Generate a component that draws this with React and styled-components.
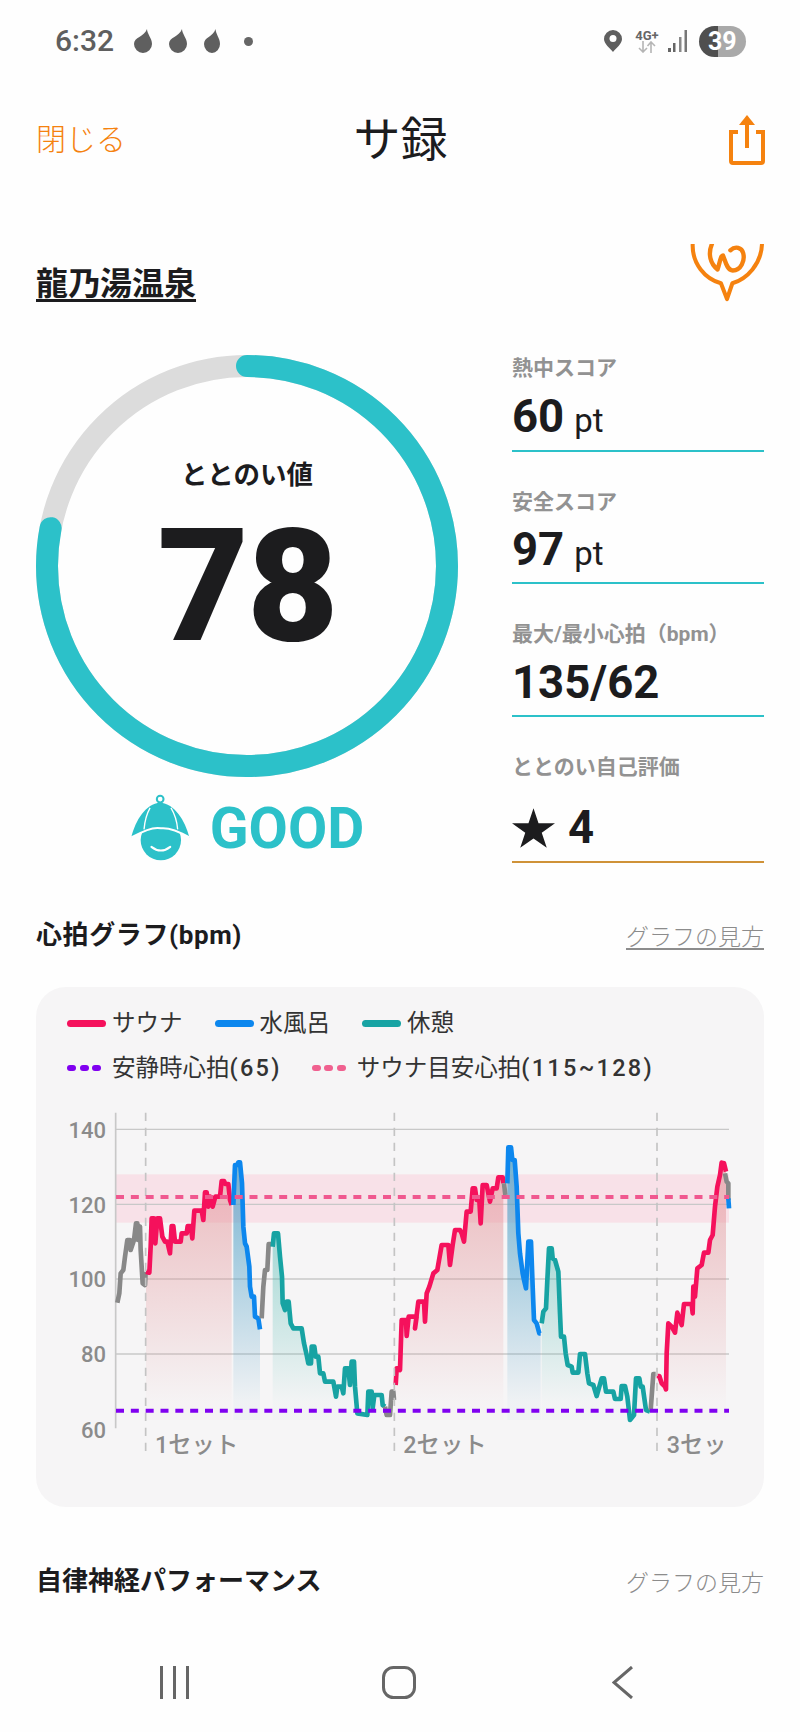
import React from 'react';
import styled, { createGlobalStyle } from 'styled-components';

const TEAL = '#2cc1c9';
const ORANGE = '#f5820f';

const GlobalStyle = createGlobalStyle`
html, body {
  margin: 0;
  padding: 0;
  background: #fff;
  font-family: Roboto, "Noto Sans CJK JP", sans-serif;
}
`

const Page = styled.div`
width: 800px;
height: 1732px;
overflow: hidden;
display: flex;
flex-direction: column;
background: #fefefe;
color: #1c1c1e;
`

// status bar
const StatusBar = styled.div`
height: 82px;
flex-shrink: 0;
display: flex;
align-items: center;
justify-content: space-between;
padding: 0 54px 0 55px;
color: #5f5f5f;
`
const StatusGroup = styled.div`
display: flex;
align-items: center;
`
const Time = styled.span`
font-size: 30px;
font-weight: 500;
line-height: 1;
margin-right: 20px;
`
const Drop = styled.svg`
margin-right: 17px;
display: block;
`
const Dot = styled.span`
width: 9px;
height: 9px;
margin-left: 7px;
border-radius: 50%;
background: #666;
`
const NetBlock = styled.div`
width: 26px;
margin: 0 8px 0 12px;
display: flex;
flex-direction: column;
align-items: center;
`
const NetLabel = styled.span`
font-size: 13px;
font-weight: 700;
line-height: 11px;
color: #666;
`
const Battery = styled.div`
width: 47px;
height: 31px;
margin-left: 12px;
border-radius: 16px;
background: linear-gradient(90deg, #4f4f4f 0 40%, #a9a9a9 40% 100%);
color: #fff;
font-size: 25px;
font-weight: 700;
line-height: 31px;
padding-left: 9px;
box-sizing: border-box;
`

// header
const Header = styled.div`
margin-top: 28px;
height: 60px;
flex-shrink: 0;
padding: 0 35px 0 36px;
display: grid;
grid-template-columns: 1fr auto 1fr;
align-items: center;
`
const CloseText = styled.span`
font-size: 30px;
font-weight: 300;
padding-bottom: 7px;
color: ${ORANGE};
`
const Title = styled.h1`
margin: 0;
font-size: 47px;
font-weight: 400;
line-height: 60px;
`
const ShareIcon = styled.svg`
justify-self: end;
display: block;
`

const VenueRow = styled.div`
margin-top: 73px;
height: 57px;
flex-shrink: 0;
padding: 0 36px;
display: flex;
align-items: flex-end;
justify-content: space-between;
`
const VenueName = styled.span`
font-size: 32px;
font-weight: 700;
line-height: 38px;
text-decoration: underline;
text-decoration-thickness: 3px;
text-underline-offset: 4px;
margin-bottom: -3px;
`
const LogoSvg = styled.svg`
display: block;
margin-bottom: -2px;
`

// score section
const ScoreRow = styled.div`
margin-top: 55px;
flex-shrink: 0;
padding: 0 36px;
display: flex;
justify-content: space-between;
`
const ScoreLeft = styled.div`
width: 422px;
display: flex;
flex-direction: column;
`
const RingWrap = styled.div`
width: 422px;
height: 422px;
display: grid;
& > * {
  grid-area: 1 / 1;
}
`
const RingCenter = styled.div`
display: flex;
flex-direction: column;
align-items: center;
padding-top: 102px;
`
const RingLabel = styled.span`
font-size: 26.5px;
font-weight: 700;
line-height: 36px;
`
const RingValue = styled.span`
margin-top: 8px;
font-size: 158px;
font-weight: 900;
line-height: 170px;
letter-spacing: -2px;
`
const Grade = styled.div`
margin-top: 16px;
display: flex;
align-items: center;
justify-content: center;
gap: 20px;
`
const GradeText = styled.span`
font-size: 57px;
font-weight: 700;
line-height: 65px;
color: ${TEAL};
`

const StatList = styled.div`
width: 252px;
display: flex;
flex-direction: column;
`
const Stat = styled.div`
height: ${(p) => p.$height}px;
box-sizing: border-box;
padding-top: ${(p) => p.$top}px;
border-bottom: 2px solid ${(p) => p.$line};
`
const StatLabel = styled.div`
font-size: 21px;
font-weight: 700;
line-height: 26px;
color: #929292;
white-space: nowrap;
`
const StatValue = styled.div`
margin-top: ${(p) => p.$gap}px;
display: flex;
align-items: baseline;
font-size: 45.5px;
font-weight: 700;
line-height: 52px;
`
const StatUnit = styled.span`
margin-left: 10px;
font-size: 33px;
font-weight: 400;
`
const StarIcon = styled.svg`
margin-right: 13px;
align-self: center;
display: block;
`

// sections
const SectionHead = styled.div`
margin-top: ${(p) => p.$top}px;
height: 36px;
flex-shrink: 0;
padding: 0 36px;
display: flex;
align-items: center;
justify-content: space-between;
`
const SectionTitle = styled.span`
font-size: 26px;
font-weight: 700;
line-height: 36px;
letter-spacing: ${(p) => p.$spacing || 0}px;
`
const HelpLink = styled.span`
font-size: 23px;
font-weight: 300;
color: #8c8c8c;
text-decoration: ${(p) => (p.$underline ? 'underline' : 'none')};
text-underline-offset: 3px;
`

// chart card
const Card = styled.div`
margin: 34px 36px 0;
height: 520px;
flex-shrink: 0;
box-sizing: border-box;
padding-top: 20px;
border-radius: 30px;
background: #f6f5f6;
overflow: hidden;
`
const Legend = styled.div`
padding-left: 31px;
display: flex;
flex-direction: column;
gap: 13px;
`
const LegendRow = styled.div`
display: flex;
gap: ${(p) => p.$gap}px;
height: 32px;
`
const LegendItem = styled.div`
display: flex;
align-items: center;
gap: ${(p) => p.$gap}px;
font-size: 23.5px;
line-height: 32px;
color: #333;
white-space: nowrap;
`
const LegendNum = styled.span`
letter-spacing: 2.3px;
font-weight: 500;
`
const LineSwatch = styled.span`
width: 39px;
height: 7px;
border-radius: 4px;
background: ${(p) => p.$color};
`
const DotSwatch = styled.span`
width: 34px;
display: flex;
justify-content: space-between;
`
const Pip = styled.span`
width: 9px;
height: 6px;
border-radius: 3px;
background: ${(p) => p.$color};
`
const ChartSvg = styled.svg`
display: block;
margin-top: 16px;
`
const AxisText = styled.text`
font-family: Roboto, "Noto Sans CJK JP", sans-serif;
font-size: ${(p) => p.$size || 66}px;
font-weight: 500;
fill: #8b8b8b;
text-anchor: ${(p) => p.$anchor || 'start'};
`

// nav bar
const NavBar = styled.div`
margin-top: auto;
margin-bottom: 33px;
padding: 0 166px 0 160px;
display: flex;
justify-content: space-between;
`
const HomeIcon = styled.svg`
display: block;
margin-right: 3px;
`

const RED = '#f5115c';
const BLUE = '#0d87ee';
const GREEN = '#17a3a3';
const GRAY = '#888888';

// chart points are in 3x card units
const shift = (pts) => pts.map(([x, y]) => [x + 1110, y]);

const series = [
  { color: GRAY, pts: [[262, 608], [268, 580], [272, 520], [280, 510], [285, 470], [292, 420], [300, 420], [302, 450], [312, 420], [318, 370], [322, 370], [324, 420], [330, 380], [332, 450], [338, 550], [345, 555], [347, 515]] },
  { color: RED, fill: 'fillRed', pts: [[348, 515], [358, 518], [362, 440], [365, 355], [372, 355], [376, 430], [382, 355], [390, 355], [397, 410], [405, 425], [412, 425], [420, 460], [425, 378], [430, 378], [435, 425], [452, 425], [455, 400], [470, 400], [473, 378], [482, 378], [487, 415], [493, 332], [515, 332], [520, 360], [525, 277], [530, 277], [535, 320], [540, 290], [548, 320], [556, 290], [570, 290], [575, 243], [582, 243], [586, 252], [595, 252], [600, 300], [605, 315]] },
  { color: BLUE, fill: 'fillBlue', pts: [[610, 315], [615, 195], [622, 195], [625, 187], [630, 187], [636, 250], [640, 380], [645, 430], [650, 440], [658, 500], [660, 560], [665, 590], [672, 590], [675, 650], [685, 655], [690, 688]] },
  { color: GRAY, pts: [[695, 655], [700, 560], [705, 510], [712, 510], [716, 432], [724, 432]] },
  { color: GREEN, fill: 'fillTeal', pts: [[728, 440], [732, 400], [744, 400], [750, 470], [756, 530], [758, 610], [765, 630], [770, 605], [776, 605], [782, 670], [790, 685], [815, 685], [822, 730], [830, 765], [835, 790], [843, 790], [845, 740], [853, 740], [857, 770], [865, 770], [870, 820], [880, 820], [885, 845], [910, 845], [918, 890], [922, 860], [935, 860], [940, 880], [945, 805], [955, 805], [960, 855], [965, 785], [972, 785], [975, 860], [982, 940], [1012, 945], [1015, 875], [1025, 875], [1028, 925], [1033, 885], [1055, 885], [1058, 915], [1065, 920]] },
  { color: GRAY, pts: [[1065, 920], [1070, 945], [1080, 945], [1085, 875], [1090, 875], [1092, 900]] },
  { color: RED, fill: 'fillRed', pts: [[1097, 855], [1100, 805], [1108, 805], ...shift([[0, 810], [5, 660], [18, 660], [20, 708], [26, 650], [50, 650], [45, 685], [55, 605], [72, 605], [75, 665], [80, 580], [88, 560], [100, 520], [112, 510], [125, 435], [145, 435], [150, 495], [158, 435], [165, 390], [180, 390], [185, 400], [192, 425], [200, 335], [212, 335], [218, 265], [225, 265], [230, 300], [238, 300], [242, 370], [248, 255], [260, 255], [270, 305], [278, 265], [290, 265], [295, 232], [308, 232], [310, 250]])] },
  { color: GRAY, pts: shift([[312, 250], [316, 285]]) },
  { color: BLUE, fill: 'fillBlue', pts: shift([[322, 250], [325, 142], [333, 142], [337, 180], [344, 180], [350, 260], [355, 400], [360, 460], [368, 520], [372, 540], [378, 565], [385, 425], [393, 425], [398, 560], [402, 660], [410, 670], [418, 700], [422, 700]]) },
  { color: GREEN, fill: 'fillTeal', pts: shift([[425, 670], [430, 635], [438, 625], [442, 540], [447, 445], [455, 445], [458, 475], [465, 480], [475, 515], [480, 640], [483, 710], [492, 710], [497, 760], [503, 795], [515, 800], [518, 818], [535, 818], [540, 762], [555, 762], [562, 820], [567, 850], [580, 855], [590, 888], [598, 860], [605, 835], [612, 835], [618, 875], [640, 875], [645, 897], [662, 897], [665, 858], [675, 858], [682, 890], [690, 960], [702, 945], [708, 835], [718, 835], [722, 860], [728, 860], [738, 930], [750, 935]]) },
  { color: GRAY, pts: shift([[752, 930], [760, 822], [767, 822]]) },
  { color: RED, fill: 'fillRed', pts: shift([[770, 828], [778, 828], [785, 850], [795, 860], [798, 868], [800, 760], [805, 670], [815, 680], [825, 698], [832, 638], [845, 675], [852, 612], [875, 612], [878, 640], [880, 560], [885, 590], [892, 505], [905, 495], [912, 458], [925, 458], [930, 420], [938, 405], [945, 320], [952, 260], [960, 225], [965, 188], [972, 190], [978, 215]]) },
  { color: GRAY, pts: shift([[975, 220], [980, 245], [985, 250], [985, 300]]) },
  { color: BLUE, pts: shift([[985, 295], [987, 325]]) },
];

const toPoints = (pts) => pts.map((p) => p.join(',')).join(' ');
const toArea = (pts) => toPoints([...pts, [pts[pts.length - 1][0], 960], [pts[0][0], 960]]);

const gridYs = [88, 313, 537, 762];
const yLabels = [['140', 115], ['120', 338], ['100', 562], ['80', 787], ['60', 1013]];
const setLines = [347, 1093, 1881];
const chartRight = 2097;

function HeartChart() {
  return (
    <ChartSvg width="728" height="405" viewBox="18 0 2184 1215">
      <defs>
        <linearGradient id="fillRed" gradientUnits="userSpaceOnUse" x1="0" y1="200" x2="0" y2="905">
          <stop offset="0" stopColor="#e28f94" stopOpacity="0.58" />
          <stop offset="1" stopColor="#e28f94" stopOpacity="0.02" />
        </linearGradient>
        <linearGradient id="fillBlue" gradientUnits="userSpaceOnUse" x1="0" y1="200" x2="0" y2="905">
          <stop offset="0" stopColor="#4d9fc6" stopOpacity="0.75" />
          <stop offset="1" stopColor="#4d9fc6" stopOpacity="0.04" />
        </linearGradient>
        <linearGradient id="fillTeal" gradientUnits="userSpaceOnUse" x1="0" y1="400" x2="0" y2="905">
          <stop offset="0" stopColor="#3fb5ab" stopOpacity="0.45" />
          <stop offset="1" stopColor="#3fb5ab" stopOpacity="0.02" />
        </linearGradient>
        <clipPath id="setClip">
          <rect x="18" y="960" width="2062" height="140" />
        </clipPath>
      </defs>

      <rect x="257" y="223" width={chartRight - 257} height="145" fill="#f8e1e8" />
      {gridYs.map((y) => (
        <line key={y} x1="257" x2={chartRight} y1={y} y2={y} stroke="#c8c8c8" strokeWidth="4" />
      ))}
      <line x1="257" x2="257" y1="38" y2="985" stroke="#c8c8c8" strokeWidth="5" />

      {series.filter((s) => s.fill).map((s, i) => (
        <polygon key={i} points={toArea(s.pts)} fill={`url(#${s.fill})`} />
      ))}
      {series.map((s, i) => (
        <polyline key={i} points={toPoints(s.pts)} fill="none" stroke={s.color} strokeWidth="14" strokeLinejoin="round" />
      ))}

      {setLines.map((x) => (
        <line key={x} x1={x} x2={x} y1="38" y2="1068" stroke="#c4c4c4" strokeWidth="5" strokeDasharray="25 20" />
      ))}
      <line x1="258" x2={chartRight} y1="291" y2="291" stroke="#f0588f" strokeWidth="12" strokeDasharray="24 20.5" />
      <line x1="258" x2={chartRight} y1="932" y2="932" stroke="#8000f0" strokeWidth="12" strokeDasharray="24 20.5" />

      {yLabels.map(([t, y]) => (
        <AxisText key={t} x="228" y={y} $anchor="end">{t}</AxisText>
      ))}
      <g clipPath="url(#setClip)">
        <AxisText x="375" y="1058" $size={70}>1セット</AxisText>
        <AxisText x="1120" y="1058" $size={70}>2セット</AxisText>
        <AxisText x="1910" y="1058" $size={70}>3セット</AxisText>
      </g>
    </ChartSvg>
  );
}

function DropIcon({ width }) {
  return (
    <Drop width={width} height="24" viewBox="0 0 18 24" preserveAspectRatio="none">
      <path d="M13 0 C13 5 18 9 18 15 A9 9 0 1 1 0 15 C0 8 10 8 13 0 Z" fill="#5f5f5f" />
    </Drop>
  );
}

function ScoreRing() {
  const r = 200;
  const c = 2 * Math.PI * r;
  return (
    <svg width="422" height="422" viewBox="0 0 422 422">
      <circle cx="211" cy="211" r={r} fill="none" stroke="#dcdcdc" strokeWidth="22" />
      <circle
        cx="211"
        cy="211"
        r={r}
        fill="none"
        stroke={TEAL}
        strokeWidth="22"
        strokeLinecap="round"
        strokeDasharray={`${c * 0.78} ${c}`}
        transform="rotate(-90 211 211)"
      />
    </svg>
  );
}

function CapIcon() {
  return (
    <svg width="60" height="70" viewBox="60 40 175 208">
      <circle cx="148" cy="58" r="10" fill="none" stroke={TEAL} strokeWidth="6" />
      <circle cx="150" cy="180" r="60" fill={TEAL} />
      <path d="M62 172 C75 120 105 72 148 68 C190 72 222 120 235 172 C205 155 175 142 150 145 C125 140 95 155 62 172 Z" fill={TEAL} />
      <path d="M62 172 C95 155 125 140 150 145 C175 142 205 155 235 172" fill="none" stroke="#fff" strokeWidth="6" />
      <path d="M118 84 C106 105 102 125 100 148 M180 84 C193 105 198 125 200 148" fill="none" stroke="#fff" strokeWidth="4" />
      <path d="M122 200 Q150 222 178 200" fill="none" stroke="#fff" strokeWidth="6" strokeLinecap="round" />
    </svg>
  );
}

function VenueLogo() {
  return (
    <LogoSvg width="74" height="58" viewBox="60 72 220 171">
      <path
        d="M68 72 C66 130 105 175 152 188 L170 235 L186 188 C230 175 272 130 274 72"
        fill="none"
        stroke={ORANGE}
        strokeWidth="12"
        strokeLinejoin="round"
        strokeLinecap="round"
      />
      <path
        d="M125 72 C113 100 120 130 142 147 C150 120 152 105 158 105 C165 122 170 150 187 150 C212 150 224 120 218 98 C214 82 195 76 180 90"
        fill="none"
        stroke={ORANGE}
        strokeWidth="13"
        strokeLinejoin="round"
        strokeLinecap="round"
      />
    </LogoSvg>
  );
}

export default function App() {
  return (
    <Page>
      <GlobalStyle />

      <StatusBar>
        <StatusGroup>
          <Time>6:32</Time>
          <DropIcon width={18} />
          <DropIcon width={18} />
          <DropIcon width={16} />
          <Dot />
        </StatusGroup>
        <StatusGroup>
          <svg width="18" height="22" viewBox="0 0 18 22">
            <path d="M9 0 A9 9 0 0 1 18 9 C18 14 12 18 9 22 C6 18 0 14 0 9 A9 9 0 0 1 9 0 Z" fill="#5f5f5f" />
            <circle cx="9" cy="8.5" r="3.5" fill="#fff" />
          </svg>
          <NetBlock>
            <NetLabel>4G+</NetLabel>
            <svg width="18" height="12" viewBox="0 0 18 12">
              <path d="M5 0 V11 M1 7 L5 11 L9 7" fill="none" stroke="#b5b5b5" strokeWidth="1.6" />
              <path d="M13 12 V1 M9.5 5 L13 1 L17 5" fill="none" stroke="#b5b5b5" strokeWidth="1.6" />
            </svg>
          </NetBlock>
          <svg width="19" height="22" viewBox="0 0 19 22">
            <rect x="0" y="18" width="3" height="4" fill="#666" />
            <rect x="5" y="13" width="2.5" height="9" fill="#666" />
            <rect x="11" y="7" width="2.5" height="15" fill="#888" />
            <rect x="16.5" y="0" width="2.5" height="22" fill="#777" />
          </svg>
          <Battery>39</Battery>
        </StatusGroup>
      </StatusBar>

      <Header>
        <CloseText>閉じる</CloseText>
        <Title>サ録</Title>
        <ShareIcon width="36" height="50" viewBox="0 0 36 50">
          <path d="M9 17 H2 V46 Q2 48 4 48 H32 Q34 48 34 46 V17 H27" fill="none" stroke={ORANGE} strokeWidth="4" />
          <path d="M18 3 V33" fill="none" stroke={ORANGE} strokeWidth="4" />
          <path d="M18 0 L26 10 H10 Z" fill={ORANGE} />
        </ShareIcon>
      </Header>

      <VenueRow>
        <VenueName>龍乃湯温泉</VenueName>
        <VenueLogo />
      </VenueRow>

      <ScoreRow>
        <ScoreLeft>
          <RingWrap>
            <ScoreRing />
            <RingCenter>
              <RingLabel>ととのい値</RingLabel>
              <RingValue>78</RingValue>
            </RingCenter>
          </RingWrap>
          <Grade>
            <CapIcon />
            <GradeText>GOOD</GradeText>
          </Grade>
        </ScoreLeft>
        <StatList>
          <Stat $height={97} $top={0} $line={TEAL}>
            <StatLabel>熱中スコア</StatLabel>
            <StatValue $gap={10}>60<StatUnit>pt</StatUnit></StatValue>
          </Stat>
          <Stat $height={132} $top={37} $line={TEAL}>
            <StatLabel>安全スコア</StatLabel>
            <StatValue $gap={9}>97<StatUnit>pt</StatUnit></StatValue>
          </Stat>
          <Stat $height={133} $top={37} $line={TEAL}>
            <StatLabel>最大/最小心拍（bpm）</StatLabel>
            <StatValue $gap={10}>135/62</StatValue>
          </Stat>
          <Stat $height={146} $top={37} $line="#cf9238">
            <StatLabel>ととのい自己評価</StatLabel>
            <StatValue $gap={22}>
              <StarIcon width="43" height="40" viewBox="0 0 24 22">
                <path d="M12 0 L14.8 8.3 H24 L16.6 13.6 L19.4 22 L12 16.8 L4.6 22 L7.4 13.6 L0 8.3 H9.2 Z" fill="#1c1c1e" />
              </StarIcon>
              4
            </StatValue>
          </Stat>
        </StatList>
      </ScoreRow>

      <SectionHead $top={54}>
        <SectionTitle $spacing={0.6}>心拍グラフ(bpm)</SectionTitle>
        <HelpLink $underline>グラフの見方</HelpLink>
      </SectionHead>

      <Card>
        <Legend>
          <LegendRow $gap={32}>
            <LegendItem $gap={6}><LineSwatch $color={RED} />サウナ</LegendItem>
            <LegendItem $gap={6}><LineSwatch $color={BLUE} />水風呂</LegendItem>
            <LegendItem $gap={6}><LineSwatch $color={GREEN} />休憩</LegendItem>
          </LegendRow>
          <LegendRow $gap={30}>
            <LegendItem $gap={11}>
              <DotSwatch><Pip $color="#8000f0" /><Pip $color="#8000f0" /><Pip $color="#8000f0" /></DotSwatch>
              <span>安静時心拍<LegendNum>(65)</LegendNum></span>
            </LegendItem>
            <LegendItem $gap={11}>
              <DotSwatch><Pip $color="#f0608f" /><Pip $color="#f0608f" /><Pip $color="#f0608f" /></DotSwatch>
              <span>サウナ目安心拍<LegendNum>(115~128)</LegendNum></span>
            </LegendItem>
          </LegendRow>
        </Legend>
        <HeartChart />
      </Card>

      <SectionHead $top={56}>
        <SectionTitle>自律神経パフォーマンス</SectionTitle>
        <HelpLink>グラフの見方</HelpLink>
      </SectionHead>

      <NavBar>
        <svg width="29" height="33" viewBox="0 0 29 33">
          <path d="M1.5 0 V33 M14.5 0 V33 M27.5 0 V33" stroke="#666" strokeWidth="3" />
        </svg>
        <HomeIcon width="34" height="33" viewBox="0 0 34 33">
          <rect x="1.5" y="1.5" width="31" height="30" rx="10" fill="none" stroke="#666" strokeWidth="3" />
        </HomeIcon>
        <svg width="22" height="33" viewBox="0 0 22 33">
          <path d="M20 1 L2 16.5 L20 32" fill="none" stroke="#666" strokeWidth="3" />
        </svg>
      </NavBar>
    </Page>
  );
}
